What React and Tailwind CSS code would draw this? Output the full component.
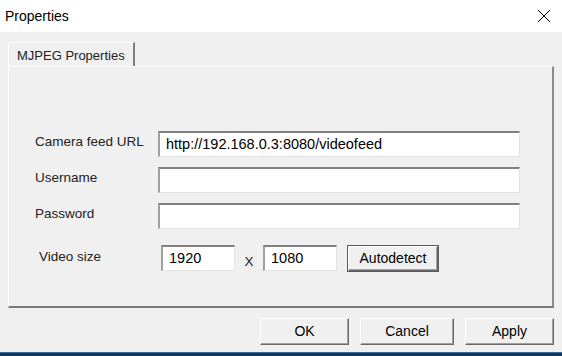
// Dialog "Properties" bergaya Windows klasik: tab MJPEG, isian kamera,
// ukuran video, dan tombol OK / Cancel / Apply di bawah.
const font = { fontFamily: '"Liberation Sans", Arial, sans-serif' }

function Field({ value = '', className = '' }) {
  return (
    <div
      className={`h-[26px] bg-white border-t-2 border-l-2 border-b border-r border-t-[#808080] border-l-[#a0a0a0] border-b-[#e3e3e3] border-r-[#e3e3e3] flex items-center pl-[6px] text-[14.5px] text-black ${className}`}
    >
      {value}
    </div>
  )
}

function Button({ children, className = '' }) {
  return (
    <div
      className={`h-[27px] bg-[#f0f0f0] border border-t-white border-l-white border-b-[#696969] border-r-[#696969] shadow-[inset_-1px_-1px_0_#a0a0a0] flex items-center justify-center text-[14px] text-black ${className}`}
    >
      {children}
    </div>
  )
}

export default function App() {
  return (
    <div style={font} className="w-[562px] h-[356px] bg-[#f0f0f0] flex flex-col overflow-hidden">
      <div className="h-[32px] bg-white flex items-center justify-between pl-[5px] pr-[11px] shrink-0">
        <span className="text-[14px] text-black">Properties</span>
        <svg width="14" height="14" viewBox="0 0 14 14" className="text-black">
          <path d="M1 1L13 13M13 1L1 13" stroke="currentColor" strokeWidth="1" />
        </svg>
      </div>

      <div className="px-[8px] pt-[10px]">
        <div className="flex">
          <div className="w-[127px] h-[24px] border-t border-l border-white border-r-2 border-r-[#808080] flex items-center pl-[8px] pt-[2px] text-[13px] text-[#222] whitespace-nowrap">
            MJPEG Properties
          </div>
        </div>
        <div className="h-[242px] border-t border-l border-white border-r-2 border-b-2 border-r-[#8a8a8a] border-b-[#7a7a7a] pt-[64px] pr-[32px]">
          <div className="flex items-center">
            <span className="w-[149px] pl-[26px] pb-[3px] text-[13.5px] text-[#222] shrink-0 whitespace-nowrap">Camera feed URL</span>
            <Field value="http://192.168.0.3:8080/videofeed" className="flex-1" />
          </div>
          <div className="flex items-center mt-[10px]">
            <span className="w-[149px] pl-[26px] pb-[3px] text-[13.5px] text-[#222] shrink-0">Username</span>
            <Field className="flex-1" />
          </div>
          <div className="flex items-center mt-[10px]">
            <span className="w-[149px] pl-[26px] pb-[3px] text-[13.5px] text-[#222] shrink-0">Password</span>
            <Field className="flex-1" />
          </div>
          <div className="flex items-center mt-[15px]">
            <span className="w-[152px] pl-[30px] pb-[3px] text-[13.5px] text-[#222] shrink-0">Video size</span>
            <Field value="1920" className="w-[74px]" />
            <span className="w-[28px] text-center text-[13.5px] text-[#222] pt-[8px]">X</span>
            <Field value="1080" className="w-[74px]" />
            <div className="ml-[10px] h-[27px] w-[92px] border border-[#5a5a5a] flex">
              <Button className="flex-1 h-full">Autodetect</Button>
            </div>
          </div>
        </div>
      </div>

      <div className="flex justify-end gap-[11px] pr-[8px] pt-[10px]">
        <Button className="w-[89px]">OK</Button>
        <Button className="w-[94px]">Cancel</Button>
        <Button className="w-[89px]">Apply</Button>
      </div>

      <div className="mt-auto h-[4px] bg-[#16375a] border-t border-t-[#3d6d9a] shrink-0" />
    </div>
  )
}
